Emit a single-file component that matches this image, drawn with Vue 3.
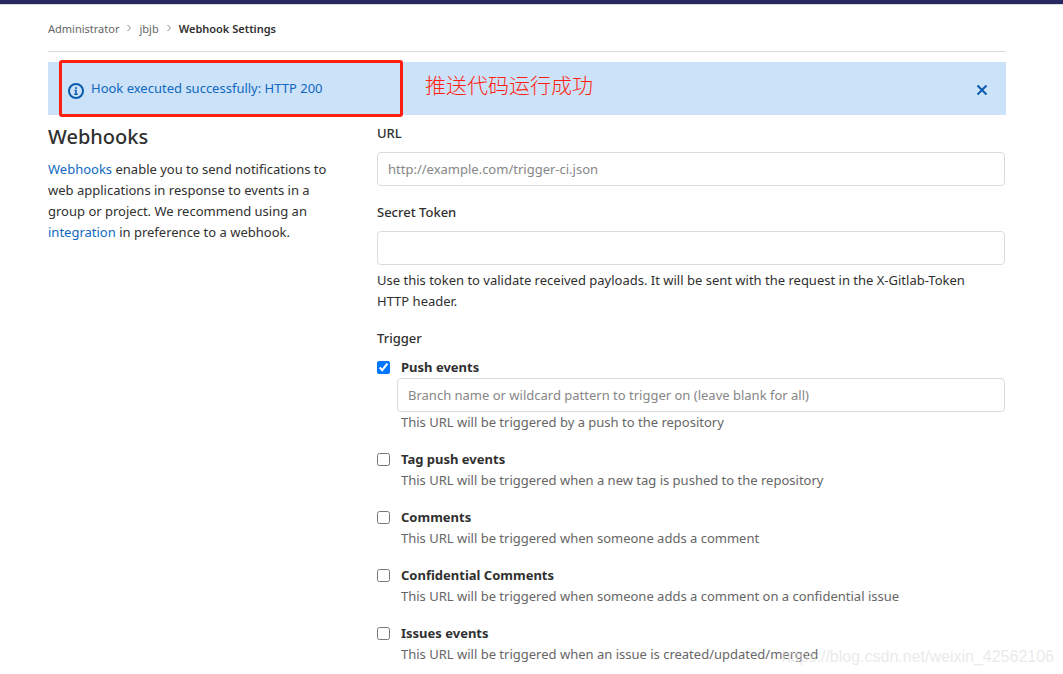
<script setup>
import { ref } from 'vue'

const showAlert = ref(true)
const url = ref('')
const token = ref('')
const branch = ref('')

const triggers = ref([
  { id: 'push', name: 'Push events', text: 'This URL will be triggered by a push to the repository', checked: true, filter: true },
  { id: 'tag', name: 'Tag push events', text: 'This URL will be triggered when a new tag is pushed to the repository', checked: false },
  { id: 'comments', name: 'Comments', text: 'This URL will be triggered when someone adds a comment', checked: false },
  { id: 'confidential', name: 'Confidential Comments', text: 'This URL will be triggered when someone adds a comment on a confidential issue', checked: false },
  { id: 'issues', name: 'Issues events', text: 'This URL will be triggered when an issue is created/updated/merged', checked: false },
])
</script>

<template>
  <div class="page">
    <div class="topbar"></div>
    <div class="container">
      <nav class="breadcrumbs" aria-label="Breadcrumbs">
        <a href="#">Administrator</a>
        <svg class="chevron" viewBox="0 0 8 8" aria-hidden="true"><path d="M2.5 1 5.5 4l-3 3" /></svg>
        <a href="#">jbjb</a>
        <svg class="chevron" viewBox="0 0 8 8" aria-hidden="true"><path d="M2.5 1 5.5 4l-3 3" /></svg>
        <a href="#" class="current">Webhook Settings</a>
      </nav>

      <div v-if="showAlert" class="alert" role="status">
        <svg class="info" viewBox="0 0 16 16" aria-hidden="true">
          <circle cx="8" cy="8" r="7" />
          <path d="M6.5 7.5H8V11M6.3 11.2h3.4" />
          <rect x="7" y="4" width="2" height="2" rx="1" />
        </svg>
        <span class="message">Hook executed successfully: HTTP 200</span>
        <button type="button" class="close" aria-label="Dismiss" @click="showAlert = false">
          <svg viewBox="0 0 12 12" aria-hidden="true"><path d="m1.5 1.5 9 9M10.5 1.5l-9 9" /></svg>
        </button>
        <div class="marker"></div>
        <span class="note">推送代码运行成功</span>
      </div>

      <main class="columns">
        <section class="intro">
          <h1>Webhooks</h1>
          <p>
            <a href="#">Webhooks</a> enable you to send notifications to web applications in response to events in a
            group or project. We recommend using an <a href="#">integration</a> in preference to a webhook.
          </p>
        </section>

        <form class="settings" @submit.prevent>
          <div class="field">
            <label class="title" for="url">URL</label>
            <input id="url" v-model="url" class="control" type="text" placeholder="http://example.com/trigger-ci.json" />
          </div>
          <div class="field">
            <label class="title" for="token">Secret Token</label>
            <input id="token" v-model="token" class="control" type="text" />
            <p class="help">
              Use this token to validate received payloads. It will be sent with the request in the X-Gitlab-Token HTTP
              header.
            </p>
          </div>
          <fieldset>
            <legend>Trigger</legend>
            <div v-for="item in triggers" :key="item.id" class="trigger">
              <input :id="item.id" v-model="item.checked" type="checkbox" />
              <div class="body">
                <label :for="item.id">{{ item.name }}</label>
                <input
                  v-if="item.filter"
                  v-model="branch"
                  class="control filter"
                  type="text"
                  aria-label="Branch name or wildcard pattern"
                  placeholder="Branch name or wildcard pattern to trigger on (leave blank for all)"
                />
                <p>{{ item.text }}</p>
              </div>
            </div>
          </fieldset>
        </form>
      </main>
    </div>
    <div class="watermark">https://blog.csdn.net/weixin_42562106</div>
  </div>
</template>

<style>
body {
  margin: 0;
  background: #fff;
}
</style>

<style scoped>
* {
  box-sizing: border-box;
}

.page {
  position: relative;
  min-height: 100vh;
  color: #303030;
  font: 13px/21px "Noto Sans", "Open Sans", sans-serif;
}

.topbar {
  height: 5px;
  background: #292961;
  border-bottom: 1px solid #dbdbdb;
}

.container {
  padding: 0 57px 0 48px;
}

a {
  color: #1068bf;
  text-decoration: none;
}

p {
  margin: 0;
}

.breadcrumbs {
  display: flex;
  align-items: center;
  height: 47px;
  border-bottom: 1px solid #dbdbdb;
  font-size: 11px;
}

.breadcrumbs a {
  color: #666;
}

.breadcrumbs .current {
  color: #303030;
  font-weight: 600;
}

.chevron {
  width: 8px;
  height: 8px;
  margin: 0 6px;
  fill: none;
  stroke: #868686;
}

.alert {
  position: relative;
  display: flex;
  align-items: center;
  height: 53px;
  margin-top: 10px;
  padding: 0 18px 0 20px;
  background: #cbe2f9;
  color: #1068bf;
}

.info {
  width: 16px;
  height: 16px;
  margin: 4px 7px 0 0;
  fill: none;
  stroke: #0b5cad;
  stroke-width: 2;
}

.info path {
  stroke-width: 1.5;
}

.info rect {
  fill: #0b5cad;
  stroke: none;
}

.message {
  flex: 1;
}

.close {
  display: flex;
  padding: 0;
  margin-top: 3px;
  border: 0;
  background: none;
  cursor: pointer;
}

.close svg {
  width: 12px;
  height: 12px;
  fill: none;
  stroke: #0b5cad;
  stroke-width: 2;
}

.marker {
  position: absolute;
  top: -2px;
  left: 11px;
  width: 344px;
  height: 57px;
  border: 3px solid #ff1f12;
  border-radius: 3px;
}

.note {
  position: absolute;
  top: 6px;
  left: 377px;
  color: #ff1f12;
  font: 300 21px/32px "Noto Sans CJK SC", sans-serif;
}

.columns {
  display: grid;
  grid-template-columns: minmax(0, 299fr) minmax(0, 629fr);
  column-gap: 30px;
}

h1 {
  margin: 8px 0;
  font-size: 20px;
  font-weight: 500;
  line-height: 28px;
}

.intro {
  padding-right: 8px;
}

.settings {
  padding: 8px 1px 0 0;
}

.field {
  margin-bottom: 16px;
}

.title {
  display: block;
  margin-bottom: 8px;
  font-weight: 500;
}

.control {
  display: block;
  width: 100%;
  height: 34px;
  padding: 6px 10px;
  border: 1px solid #dbdbdb;
  border-radius: 4px;
  background: #fff;
  color: #303030;
  font: inherit;
}

.control::placeholder {
  color: #868686;
  opacity: 1;
}

.help {
  margin-top: 5px;
  padding-right: 16px;
}

fieldset {
  min-width: 0;
  margin: 0;
  padding: 0;
  border: 0;
}

legend {
  margin-bottom: 8px;
  padding: 0;
  font-weight: 500;
}

.trigger {
  display: flex;
  align-items: flex-start;
  margin-bottom: 16px;
}

.trigger input[type="checkbox"] {
  flex: none;
  width: 13px;
  height: 13px;
  margin: 4px 11px 0 0;
}

.body {
  flex: 1;
  min-width: 0;
  color: #666;
}

.body label {
  display: block;
  color: #303030;
  font-weight: 700;
}

.filter {
  width: calc(100% + 4px);
  margin-left: -4px;
}

.watermark {
  position: absolute;
  right: 9px;
  bottom: 8px;
  color: rgba(222, 222, 222, 0.65);
  font: 16px/32px "Liberation Sans", sans-serif;
  pointer-events: none;
}
</style>
